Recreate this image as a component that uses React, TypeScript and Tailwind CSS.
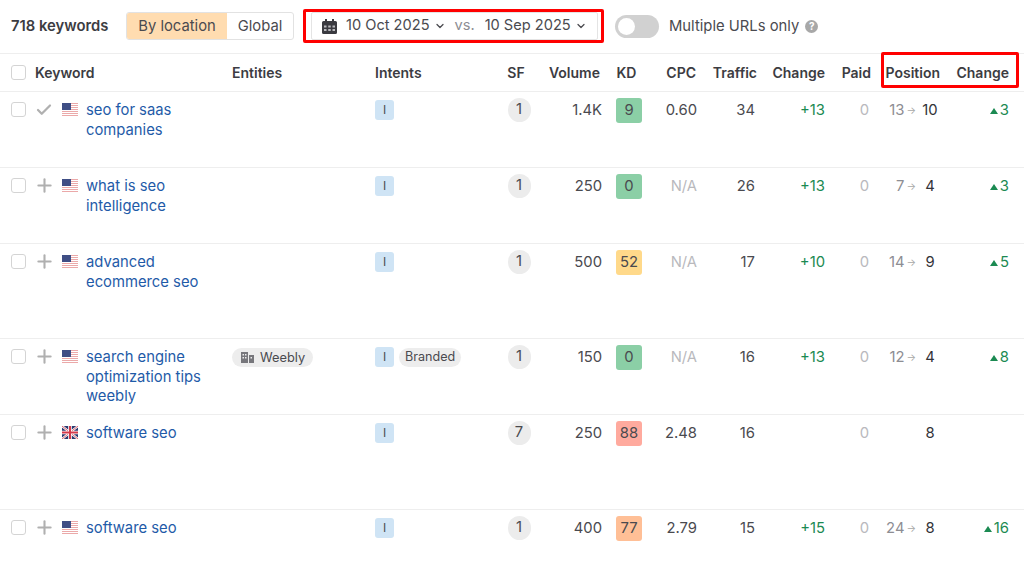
import { Check, ChevronDown, Plus } from "lucide-react";

const font = "font-['Inter','Liberation_Sans',sans-serif]";
const grid =
  "grid grid-cols-[232px_143px_130px_28px_69px_49px_46px_60px_68px_46px_69px_69px_15px]";

const rows = [
  { h: "h-[76px]", added: true, flag: "us", kw: ["seo for saas", "companies"], sf: 1, vol: "1.4K", kd: 9, kdc: "bg-[#8bcfa6]", cpc: "0.60", traffic: 34, change: "+13", from: 13, to: 10, diff: 3 },
  { h: "h-[76px]", flag: "us", kw: ["what is seo", "intelligence"], sf: 1, vol: "250", kd: 0, kdc: "bg-[#8bcfa6]", cpc: "N/A", traffic: 26, change: "+13", from: 7, to: 4, diff: 3 },
  { h: "h-[95px]", flag: "us", kw: ["advanced", "ecommerce seo"], sf: 1, vol: "500", kd: 52, kdc: "bg-[#ffd98a]", cpc: "N/A", traffic: 17, change: "+10", from: 14, to: 9, diff: 5 },
  { h: "h-[76px]", flag: "us", kw: ["search engine", "optimization tips", "weebly"], entity: "Weebly", branded: true, sf: 1, vol: "150", kd: 0, kdc: "bg-[#8bcfa6]", cpc: "N/A", traffic: 16, change: "+13", from: 12, to: 4, diff: 8 },
  { h: "h-[95px]", flag: "uk", kw: ["software seo"], sf: 7, vol: "250", kd: 88, kdc: "bg-[#ffaa9e]", cpc: "2.48", traffic: 16, to: 8 },
  { h: "h-[56px]", flag: "us", kw: ["software seo"], sf: 1, vol: "400", kd: 77, kdc: "bg-[#ffbf96]", cpc: "2.79", traffic: 15, change: "+15", from: 24, to: 8, diff: 16 },
];

function Flag({ kind }: { kind: string }) {
  if (kind === "uk") {
    return (
      <svg width="16" height="13" viewBox="0 0 16 13" className="shrink-0">
        <rect width="16" height="13" fill="#2b3a70" />
        <path d="M0 0L16 13M16 0L0 13" stroke="#fff" strokeWidth="2.2" />
        <path d="M0 0L16 13M16 0L0 13" stroke="#d3384a" strokeWidth="0.8" />
        <path d="M8 0V13M0 6.5H16" stroke="#fff" strokeWidth="3.6" />
        <path d="M8 0V13M0 6.5H16" stroke="#d3384a" strokeWidth="2" />
      </svg>
    );
  }
  return (
    <svg width="16" height="13" viewBox="0 0 16 13" className="shrink-0">
      <rect width="16" height="13" fill="#fff" />
      <path d="M0 .5H16M0 2.5H16M0 4.5H16M0 6.5H16M0 8.5H16M0 10.5H16M0 12.5H16" stroke="#eba9a9" strokeWidth="1" />
      <rect width="9" height="7" fill="#3f4e85" />
    </svg>
  );
}

function CalendarIcon() {
  return (
    <svg width="15" height="15" viewBox="0 0 15 15" className="shrink-0">
      <path d="M3 0h2v2h5V0h2v2h1.5A1.5 1.5 0 0 1 15 3.5v10a1.5 1.5 0 0 1-1.5 1.5h-12A1.5 1.5 0 0 1 0 13.5v-10A1.5 1.5 0 0 1 1.5 2H3z" fill="#3a3a40" />
      <path d="M2 6.5h2.5v2H2zM6.25 6.5h2.5v2h-2.5zM10.5 6.5H13v2h-2.5zM2 10h2.5v2H2zM6.25 10h2.5v2h-2.5zM10.5 10H13v2h-2.5z" fill="#b9b9bd" />
    </svg>
  );
}

function Box() {
  return <span className="w-[15px] h-[15px] shrink-0 rounded-[3px] border border-[#d4d4d4] bg-white" />;
}

export default function App() {
  return (
    <div className={`${font} relative w-[1024px] h-[565px] overflow-hidden bg-white text-[14.8px] text-[#4a4a4f]`}>
      <div className="h-[54px] flex items-center pl-[11px] pb-[1px] border-b border-[#eeeeee]">
        <span className="w-[115px] font-semibold text-[#3c3c42]">718 keywords</span>
        <div className="flex h-[28px] w-[168px] rounded-[3px] border border-[#e2e2e2] overflow-hidden">
          <span className="w-[100px] bg-[#ffdcb0] flex items-center justify-center">By location</span>
          <span className="flex-1 flex items-center justify-center">Global</span>
        </div>
        <div className="ml-[9px] w-[301px] h-[34px] rounded-[2px] border-[3px] border-[#ff0000] flex items-center pl-[5px]">
          <div className="w-[287px] h-[28px] border border-[#e4e4e4] flex items-center pl-[10px] rounded-[2px] text-[14.6px]">
            <CalendarIcon />
            <span className="ml-[9px]">10 Oct 2025</span>
            <ChevronDown size={12} strokeWidth={2.5} className="ml-[4px]" />
            <span className="ml-[9px] text-[#8d8d93]">vs.</span>
            <span className="ml-[10px]">10 Sep 2025</span>
            <ChevronDown size={12} strokeWidth={2.5} className="ml-[4px]" />
          </div>
        </div>
        <span className="ml-[11px] w-[44px] h-[23px] rounded-full bg-[#d1d1d1] p-[3px]">
          <span className="block w-[17px] h-[17px] rounded-full bg-white" />
        </span>
        <span className="ml-[10px]">Multiple URLs only</span>
        <span className="ml-[6px] w-[13px] h-[13px] rounded-full bg-[#a8a8a8] text-white text-[10px] font-bold flex items-center justify-center">?</span>
      </div>

      <div className={`${grid} h-[38px] items-center pb-[1px] border-b border-[#eeeeee] font-semibold text-[14px] text-[#3c3c42]`}>
        <div className="flex items-center pl-[11px]">
          <Box />
          <span className="ml-[9px]">Keyword</span>
        </div>
        <span>Entities</span>
        <span>Intents</span>
        <span className="text-center pr-[6px]">SF</span>
        <span className="text-right pr-[2px]">Volume</span>
        <span className="text-center">KD</span>
        <span className="text-right pr-[1px]">CPC</span>
        <span className="text-right">Traffic</span>
        <span className="text-right">Change</span>
        <span className="text-right">Paid</span>
        <span className="text-right">Position</span>
        <span className="text-right">Change</span>
      </div>

      {rows.map((r, i) => (
        <div key={i} className={`${grid} ${r.h} items-start pt-[9px] ${i < rows.length - 1 ? "border-b border-[#eeeeee]" : ""} leading-[19.5px]`}>
          <div className="flex items-start pl-[11px]">
            <span className="h-[19px] -mt-px flex items-center"><Box /></span>
            <span className="w-[14px] ml-[11px] h-[19px] -mt-px flex items-center justify-center text-[#b0b0b0]">
              {r.added ? (
                <Check size={18} strokeWidth={3} className="shrink-0" />
              ) : (
                <Plus size={21} strokeWidth={2.4} className="shrink-0" />
              )}
            </span>
            <span className="ml-[11px] h-[19px] -mt-px flex items-center"><Flag kind={r.flag} /></span>
            <span className="ml-[8px] text-[#1f5ba8]">
              {r.kw.map((l) => (
                <span key={l} className="block whitespace-nowrap">{l}</span>
              ))}
            </span>
          </div>
          <div>
            {r.entity && (
              <span className="inline-flex items-center h-[19px] w-[81px] pl-[9px] rounded-full bg-[#ededed] text-[12.8px]">
                <svg width="13" height="11" viewBox="0 0 13 11" className="mr-[6px]" fill="#77777c">
                  <path fillRule="evenodd" d="M0 0h7v11H0zM1.5 2v1.5H3V2zM4 2v1.500h1.500V2zM1.500 5v1.500H3V5zM4 5v1.500h1.500V5zM8 3h5v8H8zM9.500 5v1.500H11V5z" />
                </svg>
                {r.entity}
              </span>
            )}
          </div>
          <div className="flex items-center gap-[5px] -mt-px">
            <span className="w-[19px] h-[20px] rounded-[3px] bg-[#cfe4f5] flex items-center justify-center text-[12px]">I</span>
            {r.branded && <span className="h-[19px] px-[6px] rounded-full bg-[#ededed] text-[12.6px] flex items-center">Branded</span>}
          </div>
          <div className="flex justify-center">
            <span className="w-[23px] h-[24px] mt-[-3px] rounded-full bg-[#ececec] flex items-center justify-center">{r.sf}</span>
          </div>
          <span className="text-right">{r.vol}</span>
          <div className="flex justify-start pl-[14px]">
            <span className={`${r.kdc} w-[26px] h-[25px] mt-[-3px] rounded-[3px] flex items-center justify-center`}>{r.kd}</span>
          </div>
          <span className={`text-right ${r.cpc === "N/A" ? "text-[#b9b9bd]" : ""}`}>{r.cpc}</span>
          <span className="text-right pr-[2px]">{r.traffic}</span>
          <span className="text-right text-[#1b8a52]">{r.change}</span>
          <span className="text-right text-[#b9b9bd] pr-[2px]">0</span>
          <div className="flex items-center justify-end">
            {r.from && (
              <>
                <span className="text-[#8d8d93]">{r.from}</span>
                <span className="text-[#a8a8a8] text-[10px] ml-[2px] mr-[4px]">→</span>
              </>
            )}
            <span className="w-[20px] text-center text-[#333338]">{r.to}</span>
          </div>
          <div className="flex items-center justify-end text-[#1b8a52]">
            {r.diff && (
              <>
                <span className="w-0 h-0 mr-[2px] border-x-[4.5px] border-x-transparent border-b-[6px] border-b-[#1b8a52]" />
                <span>{r.diff}</span>
              </>
            )}
          </div>
        </div>
      ))}

      {/* highlight drawn over the header cells */}
      <div className="absolute left-[881px] top-[52px] w-[138px] h-[36px] rounded-[2px] border-[3px] border-[#ff0000]" />
    </div>
  );
}
